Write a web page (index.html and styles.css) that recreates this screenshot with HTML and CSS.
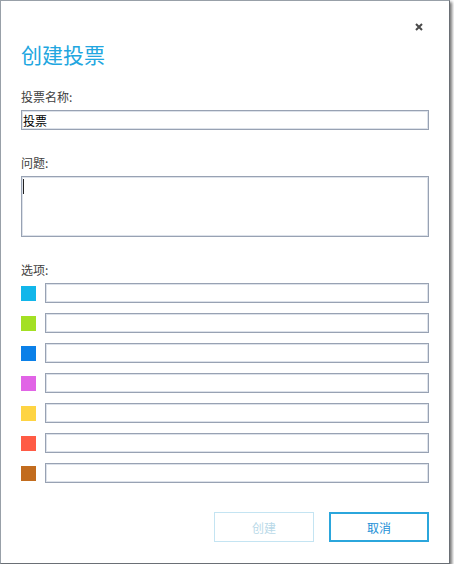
FILE: index.html
```html
<!DOCTYPE html>
<html lang="zh-CN">

<head>
    <meta charset="UTF-8">
    <meta name="viewport" content="width=device-width, initial-scale=1.0">
    <title>创建投票</title>
    <link rel="stylesheet" href="styles.css">
</head>

<body>
    <div class="dialog">
        <div class="dialog-header">
            <button class="close" title="关闭">
                <svg width="8" height="8" viewBox="0 0 8 8" xmlns="http://www.w3.org/2000/svg">
                    <path d="M1 1L7 7M7 1L1 7" stroke="#4a4a4a" stroke-width="2" />
                </svg>
            </button>
        </div>
        <h1 class="title">创建投票</h1>

        <div class="field field-first">
            <label class="label">投票名称:</label>
            <input class="text-input" type="text" value="投票">
        </div>

        <div class="field">
            <label class="label">问题:</label>
            <div class="area-wrap">
                <textarea class="text-area"></textarea>
                <span class="caret"></span>
            </div>
        </div>

        <div class="field">
            <label class="label">选项:</label>
            <div class="options">
                <div class="option"><span class="swatch" style="background:#12b6ea"></span><input class="text-input" type="text"></div>
                <div class="option"><span class="swatch" style="background:#a3e023"></span><input class="text-input" type="text"></div>
                <div class="option"><span class="swatch" style="background:#0b80e8"></span><input class="text-input" type="text"></div>
                <div class="option"><span class="swatch" style="background:#e164e6"></span><input class="text-input" type="text"></div>
                <div class="option"><span class="swatch" style="background:#fed443"></span><input class="text-input" type="text"></div>
                <div class="option"><span class="swatch" style="background:#ff5b45"></span><input class="text-input" type="text"></div>
                <div class="option"><span class="swatch" style="background:#c26c1e"></span><input class="text-input" type="text"></div>
            </div>
        </div>

        <div class="buttons">
            <button class="btn btn-disabled" disabled>创建</button>
            <button class="btn btn-cancel">取消</button>
        </div>
    </div>
</body>

</html>
```

FILE: styles.css
```css
* {
    font-family: "Noto Sans CJK SC", "Noto Sans", sans-serif;
    box-sizing: border-box;
}

body {
    margin: 0;
    background-color: white;
}

.dialog {
    width: 450px;
    height: 564px;
    border: 1px solid #98a0a8;
    border-right-color: #6a6f75;
    border-bottom-color: #6a6f75;
    box-shadow: 2px 2px 3px rgba(0, 0, 0, 0.55);
    padding: 0 20px;
    background: white;
}

.dialog-header {
    height: 39px;
    display: flex;
    justify-content: flex-end;
    align-items: flex-start;
    padding-top: 18px;
}

.close {
    width: 16px;
    height: 16px;
    margin-right: 2px;
    padding: 0;
    border: none;
    background: none;
    display: flex;
    align-items: center;
    justify-content: center;
}

.title {
    margin: 0;
    font-size: 21px;
    line-height: 28px;
    font-weight: normal;
    color: #21a6e0;
}

.field {
    margin-top: 25px;
    display: flex;
    flex-direction: column;
}

.field-first {
    margin-top: 21px;
}

.label {
    font-size: 12px;
    line-height: 16px;
    color: #404040;
    margin-bottom: 5px;
}

.text-input {
    height: 20px;
    width: 100%;
    border: 1px solid #98a2b3;
    box-shadow: inset 0 0 0 1px #dde2ea;
    padding: 0 1px;
    font-size: 12px;
    color: #000;
    outline: none;
}

.area-wrap {
    position: relative;
}

.text-area {
    display: block;
    width: 100%;
    height: 61px;
    border: 1px solid #98a2b3;
    box-shadow: inset 0 0 0 1px #dde2ea;
    resize: none;
    outline: none;
}

.caret {
    position: absolute;
    left: 2px;
    top: 3px;
    width: 1px;
    height: 15px;
    background: #222;
}

.options {
    display: flex;
    flex-direction: column;
    gap: 10px;
}

.option {
    display: flex;
    align-items: center;
    gap: 9px;
}

.swatch {
    flex: none;
    width: 15px;
    height: 15px;
}

.buttons {
    margin-top: 29px;
    display: flex;
    justify-content: flex-end;
    gap: 15px;
}

.btn {
    width: 100px;
    height: 30px;
    background: white;
    font-size: 12px;
    padding: 0;
}

.btn-disabled {
    border: 1px solid #c4e4f2;
    color: #b9d9e8;
}

.btn-cancel {
    border: 2px solid #2ba6dc;
    color: #1b8fd6;
}
```
